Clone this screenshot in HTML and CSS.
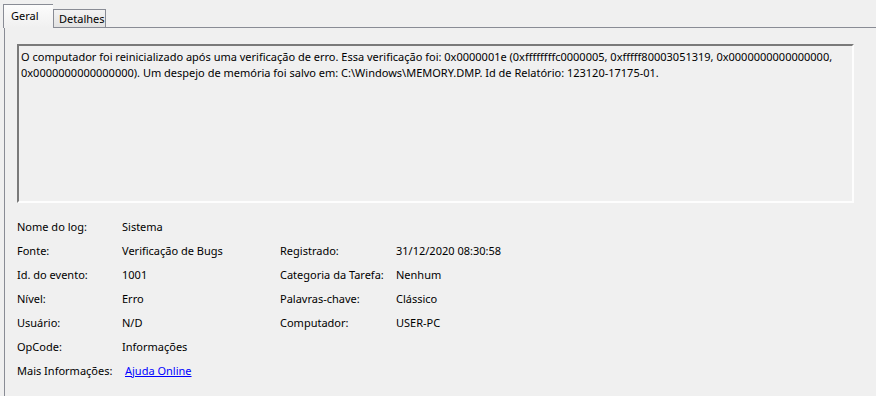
FILE: index.html
```html
<!DOCTYPE html>
<html lang="pt-BR">
<head>
    <meta charset="UTF-8">
    <title>Propriedades do Evento</title>
    <link rel="stylesheet" href="styles.css">
</head>
<body>

    <div class="tabs">
        <div class="tab active">Geral</div>
        <div class="tab">Detalhes</div>
    </div>

    <div class="panel">
        <div class="message">O computador foi reinicializado após uma verificação de erro. Essa verificação foi: 0x0000001e (0xffffffffc0000005, 0xfffff80003051319, 0x0000000000000000, 0x0000000000000000). Um despejo de memória foi salvo em: C:\Windows\MEMORY.DMP. Id de Relatório: 123120-17175-01.</div>

        <div class="details">
            <span>Nome do log:</span><span>Sistema</span><span></span><span></span>
            <span>Fonte:</span><span>Verificação de Bugs</span><span>Registrado:</span><span>31/12/2020 08:30:58</span>
            <span>Id. do evento:</span><span>1001</span><span>Categoria da Tarefa:</span><span>Nenhum</span>
            <span>Nível:</span><span>Erro</span><span>Palavras-chave:</span><span>Clássico</span>
            <span>Usuário:</span><span>N/D</span><span>Computador:</span><span>USER-PC</span>
            <span>OpCode:</span><span>Informações</span><span></span><span></span>
            <span>Mais Informações:</span><span><a class="link" href="#">Ajuda Online</a></span><span></span><span></span>
        </div>
    </div>

</body>
</html>
```

FILE: styles.css
```css
html, body {
    height: 100%;
}
body {
    margin: 0;
    background-color: #f0f0f0;
    font-family: "Noto Sans", "Open Sans", sans-serif;
    font-size: 11px;
    color: #000;
    overflow: hidden;
    display: flex;
    flex-direction: column;
}

/* Tabs */
.tabs {
    display: flex;
    align-items: flex-end;
    padding: 4px 0 0 3px;
    height: 23px;
    flex: none;
}
.tab {
    box-sizing: border-box;
    height: 18px;
    width: 53px;
    padding: 1px 0 0 5px;
    border: 1px solid #898c95;
    border-bottom: none;
    background: linear-gradient(#f3f3f3, #e2e2e2);
    line-height: 16px;
    white-space: nowrap;
}
.tab.active {
    height: 24px;
    width: 50px;
    margin-bottom: -1px;
    padding: 3px 0 0 7px;
    background: linear-gradient(#fcfcfc, #f0f0f0);
    border-right: none;
    position: relative;
    z-index: 1;
}

/* Panel */
.panel {
    flex: 1;
    min-height: 0;
    margin-left: 4px;
    border-top: 1px solid #898c95;
    border-left: 1px solid #898c95;
    padding: 16px 0 0 12px;
}

.message {
    box-sizing: border-box;
    width: 837px;
    height: 159px;
    padding: 3px 3px 0 2px;
    border-top: 2px solid #7a7a7a;
    border-left: 2px solid #7a7a7a;
    border-right: 2px solid #fdfdfd;
    border-bottom: 2px solid #fdfdfd;
    line-height: 16px;
}

/* Details grid */
.details {
    display: grid;
    grid-template-columns: 105px 158px 116px 200px;
    grid-auto-rows: 24px;
    align-items: center;
    margin-top: 11px;
}
.link {
    color: #0000ff;
    margin-left: 3px;
}
```
